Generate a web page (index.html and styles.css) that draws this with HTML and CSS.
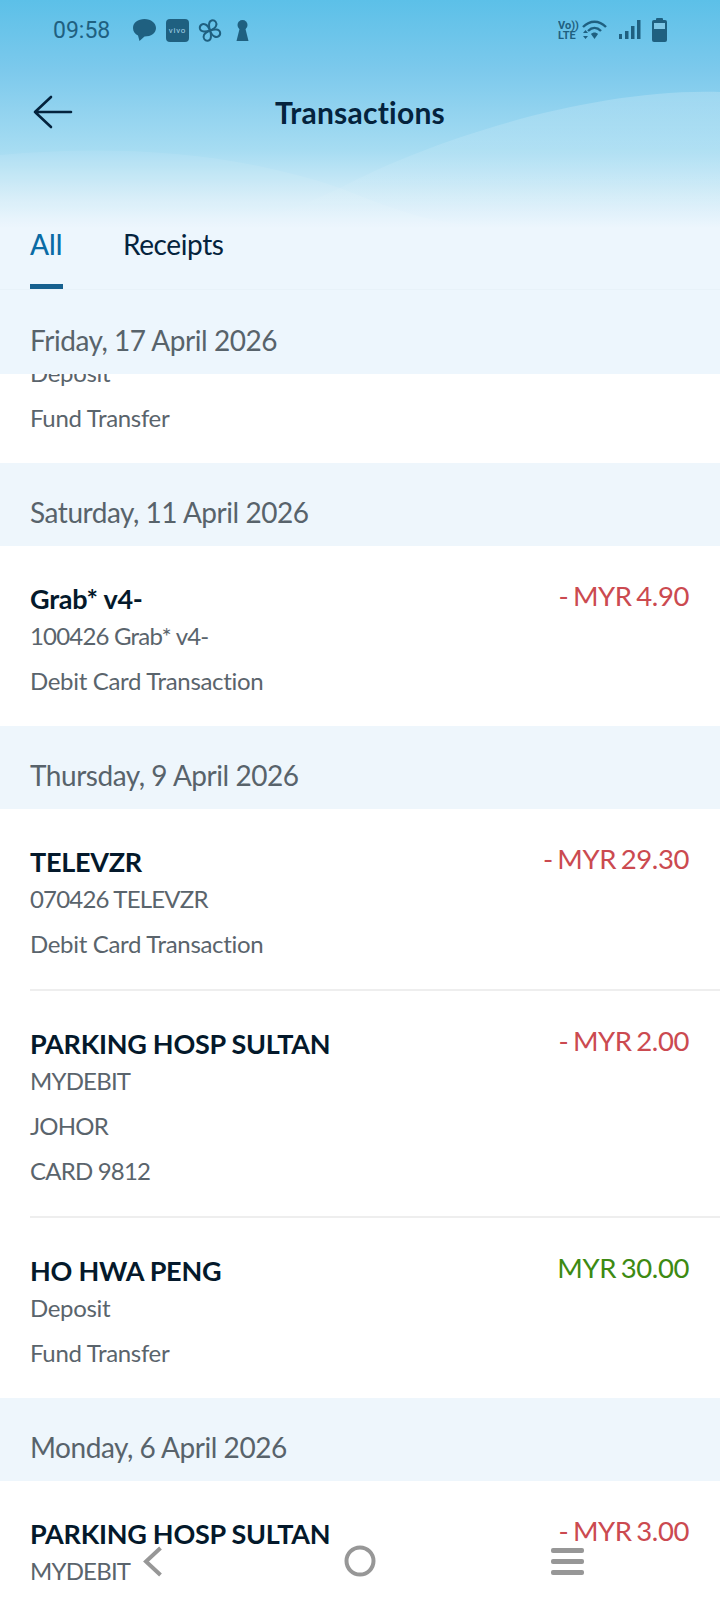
FILE: index.html
```html
<!DOCTYPE html>
<html>
<head>
  <title>Transactions</title>
  <meta charset="utf-8">
  <link rel="stylesheet" href="styles.css">
</head>
<body>
  <div id="phone">
    <div id="top">
      <svg class="waves" width="720" height="240" viewBox="0 0 720 240">
        <defs>
          <linearGradient id="fade" x1="0" y1="0" x2="0" y2="1">
            <stop offset="0" stop-color="#fff" stop-opacity=".2"/>
            <stop offset="1" stop-color="#fff" stop-opacity="0"/>
          </linearGradient>
        </defs>
        <path d="M340 188C430 140 590 88 720 92V225H240C280 215 310 202 340 188Z" fill="url(#fade)"/>
        <path d="M0 155C110 145 230 150 340 188C400 212 440 225 480 225H0Z" fill="#fff" opacity=".08"/>
      </svg>
      <div id="status">
        <span class="time">09:58</span>
        <svg class="notif" width="116" height="26" viewBox="0 0 116 26" fill="#1f6080">
          <path d="M11.500 1C5 1 0 4.500 0 10c0 3.500 2 6 5 7.500L6.500 23l5-4.500c6.500 0 11.500-3.500 11.500-8.500S18 1 11.500 1Z"/>
          <rect x="33" y="1" width="23" height="23" rx="4"/>
          <text x="44.500" y="15" class="vivo">vivo</text>
          <g fill="none" stroke="#1f6080" stroke-width="2">
            <path d="M77 12.500C75.500 8 75.500 3.500 78.500 2.500C82 1.500 84.500 5 83 8C82 10.500 79.500 11.500 77 12.500Z"/>
            <path d="M77 12.500C75.500 8 75.500 3.500 78.500 2.500C82 1.500 84.500 5 83 8C82 10.500 79.500 11.500 77 12.500Z" transform="rotate(90 77 12.500)"/>
            <path d="M77 12.500C75.500 8 75.500 3.500 78.500 2.500C82 1.500 84.500 5 83 8C82 10.500 79.500 11.500 77 12.500Z" transform="rotate(180 77 12.500)"/>
            <path d="M77 12.500C75.500 8 75.500 3.500 78.500 2.500C82 1.500 84.500 5 83 8C82 10.500 79.500 11.500 77 12.500Z" transform="rotate(270 77 12.500)"/>
          </g>
          <circle cx="109.500" cy="7" r="5"/>
          <path d="M107 9h5l3.500 14h-12Z"/>
        </svg>
        <span class="grow"></span>
        <svg class="sys" width="110" height="26" viewBox="0 0 110 26" fill="#1f6080">
          <text x="0" y="11" class="lte">Vo))</text>
          <text x="0" y="21" class="lte">LTE</text>
          <g fill="none" stroke="#1f6080" stroke-width="2.400">
            <path d="M25 9c7-7 16-7 23 0"/>
            <path d="M30 13c4-4 9-4 13 0"/>
          </g>
          <path d="M33 16c2-2 5-2 7 0l-3.500 5Z"/>
          <path d="M25 15l2.500-3 2.500 3ZM25 18l2.500 3 2.500-3Z"/>
          <rect x="61" y="16" width="3" height="5"/>
          <rect x="67" y="13" width="3.500" height="8"/>
          <rect x="73" y="8" width="3.500" height="13"/>
          <rect x="79" y="2" width="3.500" height="19"/>
          <rect x="98" y="0" width="7" height="3" rx="1"/>
          <rect x="94" y="2" width="15" height="22" rx="2"/>
          <rect x="96" y="5" width="11" height="6" fill="#7fc7e6"/>
        </svg>
      </div>
      <div id="bar">
        <svg class="back" width="40" height="34" viewBox="0 0 40 34" fill="none" stroke="#04233d" stroke-width="2.600" stroke-linecap="round" stroke-linejoin="round">
          <path d="M18 2 2 17l16 15M2 17h36"/>
        </svg>
        <h1>Transactions</h1>
      </div>
      <div id="tabs">
        <a href="#" class="tab on">All</a>
        <a href="#" class="tab">Receipts</a>
      </div>
      <div class="date first">Friday, 17 April 2026</div>
    </div>

    <div class="row clipped">
      <div class="sub">Deposit</div>
      <div class="sub">Fund Transfer</div>
    </div>

    <div class="date">Saturday, 11 April 2026</div>
    <div class="row">
      <div class="info">
        <div class="name">Grab* v4-</div>
        <div class="sub tight">100426 Grab* v4-</div>
        <div class="sub">Debit Card Transaction</div>
      </div>
      <div class="amt neg">- MYR 4.90</div>
    </div>

    <div class="date">Thursday, 9 April 2026</div>
    <div class="row line">
      <div class="info">
        <div class="name">TELEVZR</div>
        <div class="sub tight">070426 TELEVZR</div>
        <div class="sub">Debit Card Transaction</div>
      </div>
      <div class="amt neg">- MYR 29.30</div>
    </div>
    <div class="row line">
      <div class="info">
        <div class="name">PARKING HOSP SULTAN</div>
        <div class="sub tight">MYDEBIT</div>
        <div class="sub tight">JOHOR</div>
        <div class="sub tight">CARD 9812</div>
      </div>
      <div class="amt neg">- MYR 2.00</div>
    </div>
    <div class="row">
      <div class="info">
        <div class="name">HO HWA PENG</div>
        <div class="sub">Deposit</div>
        <div class="sub">Fund Transfer</div>
      </div>
      <div class="amt pos">MYR 30.00</div>
    </div>

    <div class="date">Monday, 6 April 2026</div>
    <div class="row">
      <div class="info">
        <div class="name">PARKING HOSP SULTAN</div>
        <div class="sub tight">MYDEBIT</div>
      </div>
      <div class="amt neg">- MYR 3.00</div>
    </div>

    <div id="nav">
      <svg width="19" height="31" viewBox="0 0 19 31" fill="none" stroke="#979797" stroke-width="4">
        <path d="M17.500 2 3 15.500 17.500 29"/>
      </svg>
      <svg width="32" height="32" viewBox="0 0 32 32" fill="none" stroke="#979797" stroke-width="4">
        <circle cx="16" cy="16" r="13.500"/>
      </svg>
      <svg width="33" height="27" viewBox="0 0 33 27" fill="#979797">
        <rect x="0" y="0" width="33" height="5" rx="2"/>
        <rect x="0" y="11" width="33" height="5" rx="2"/>
        <rect x="0" y="22" width="33" height="5" rx="2"/>
      </svg>
    </div>
  </div>
</body>
</html>
```

FILE: styles.css
```css
*{
  padding:0;
  margin:0;
  box-sizing:border-box;
}
a{
  text-decoration:none;
}
body{
  font-family:Lato,"Liberation Sans",sans-serif;
  background:#fff;
}
#phone{
  width:720px;
  height:1600px;
  position:relative;
  overflow:hidden;
  background:#fff;
}
#top{
  position:relative;
  background:linear-gradient(180deg,#5cc0e8 0,#7cc9ec 70px,#a6dcf2 150px,#d2ecf8 195px,#edf6fd 228px,#edf6fd 374px);
}
.waves{
  position:absolute;
  left:0;
  top:0;
}
#status{
  height:60px;
  padding:18px 52px 0 53px;
  display:flex;
  align-items:flex-start;
  position:relative;
}
.time{
  font-family:Roboto,sans-serif;
  font-size:23px;
  line-height:26px;
  color:#1f6080;
  margin-right:23px;
}
.grow{
  flex:1;
}
.vivo{
  font-family:Roboto,sans-serif;
  font-size:8px;
  letter-spacing:.8px;
  text-anchor:middle;
  fill:#a6d4e8;
}
.lte{
  font-family:Roboto,sans-serif;
  font-size:11px;
  font-weight:700;
}
#bar{
  height:104px;
  display:grid;
  grid-template-columns:1fr auto 1fr;
  align-items:center;
  padding-left:33px;
  padding-right:33px;
  position:relative;
}
h1{
  font-size:30px;
  font-weight:700;
  letter-spacing:.25px;
  color:#04233d;
}
#tabs{
  display:flex;
  gap:60px;
  padding:0 30px;
  height:126px;
  border-bottom:1px solid #e8f2f9;
  position:relative;
}
.tab{
  height:125px;
  font-size:28px;
  line-height:34px;
  letter-spacing:-.4px;
  padding-top:63px;
  color:#04233d;
}
.tab.on{
  width:33px;
  letter-spacing:0;
  font-weight:500;
  color:#0a6ba5;
  border-bottom:5px solid #17618f;
}
.date{
  height:83px;
  background:#eef6fc;
  padding:15px 30px 0;
  font-size:28px;
  line-height:69px;
  letter-spacing:-.46px;
  color:#58636b;
}
.date.first{
  height:84px;
  padding-top:16px;
  background:none;
  position:relative;
}
.row{
  display:flex;
  justify-content:space-between;
  padding:36px 31px 23px 30px;
  position:relative;
}
.row.line{
  padding-bottom:25px;
}
.line::after{
  content:"";
  position:absolute;
  left:30px;
  right:0;
  bottom:0;
  height:2px;
  background:#eeeeee;
}
.clipped{
  height:89px;
  padding-top:0;
  flex-direction:column;
  justify-content:flex-end;
  overflow:hidden;
}
.name{
  font-size:27px;
  font-weight:700;
  line-height:34px;
  letter-spacing:-.26px;
  margin-bottom:-3px;
  color:#04192b;
}
.sub{
  font-size:24px;
  line-height:45px;
  letter-spacing:-.32px;
  color:#5a646c;
}
.tight{
  letter-spacing:-.8px;
}
.amt{
  font-size:27.500px;
  line-height:28px;
  letter-spacing:-.4px;
  word-spacing:-2px;
}
.neg{
  color:#cb4a50;
}
.pos{
  color:#3d8a12;
}
#nav{
  position:absolute;
  left:143px;
  top:1545px;
  display:flex;
  align-items:center;
  gap:0;
}
#nav svg:first-child{
  margin-right:182px;
}
#nav svg:nth-child(2){
  margin-right:175px;
}
```
